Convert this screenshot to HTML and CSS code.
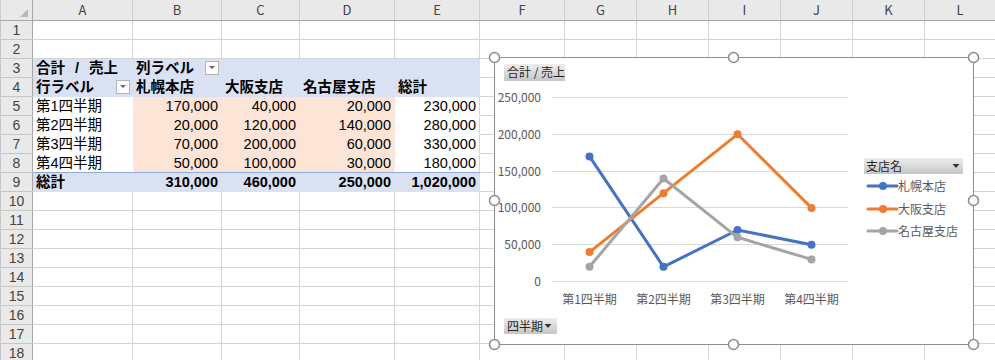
FILE: index.html
```html
<!DOCTYPE html>
<html lang="ja">
<head>
    <meta charset="UTF-8">
    <title>ピボットテーブル - 売上</title>
    <link rel="stylesheet" href="styles.css">
</head>
<body>

<div class="book">
    <table class="sheet">
        <colgroup>
            <col class="col-rh"><col class="col-a"><col class="col-b"><col class="col-c"><col class="col-d"><col class="col-e">
            <col class="col-f"><col class="col-g"><col class="col-h"><col class="col-i"><col class="col-j"><col class="col-k"><col class="col-l">
        </colgroup>
        <tr class="colhdr">
            <th class="corner"></th><th>A</th><th>B</th><th>C</th><th>D</th><th>E</th><th>F</th><th>G</th><th>H</th><th>I</th><th>J</th><th>K</th><th>L</th>
        </tr>
        <tr><th>1</th><td></td><td></td><td></td><td></td><td></td><td></td><td></td><td></td><td></td><td></td><td></td><td></td></tr>
        <tr><th>2</th><td></td><td></td><td></td><td></td><td></td><td></td><td></td><td></td><td></td><td></td><td></td><td></td></tr>
        <tr>
            <th>3</th>
            <td class="pv-h wide">合計 / 売上</td>
            <td class="pv-h"><div class="fld"><span>列ラベル</span><span class="dd"></span></div></td>
            <td class="pv-h"></td><td class="pv-h"></td><td class="pv-h"></td>
            <td></td><td></td><td></td><td></td><td></td><td></td><td></td>
        </tr>
        <tr>
            <th>4</th>
            <td class="pv-h"><div class="fld"><span>行ラベル</span><span class="dd"></span></div></td>
            <td class="pv-h">札幌本店</td><td class="pv-h">大阪支店</td><td class="pv-h">名古屋支店</td><td class="pv-h">総計</td>
            <td></td><td></td><td></td><td></td><td></td><td></td><td></td>
        </tr>
        <tr>
            <th>5</th>
            <td class="pv-r">第1四半期</td><td class="pv-v">170,000</td><td class="pv-v">40,000</td><td class="pv-v">20,000</td><td class="pv-t">230,000</td>
            <td></td><td></td><td></td><td></td><td></td><td></td><td></td>
        </tr>
        <tr>
            <th>6</th>
            <td class="pv-r">第2四半期</td><td class="pv-v">20,000</td><td class="pv-v">120,000</td><td class="pv-v">140,000</td><td class="pv-t">280,000</td>
            <td></td><td></td><td></td><td></td><td></td><td></td><td></td>
        </tr>
        <tr>
            <th>7</th>
            <td class="pv-r">第3四半期</td><td class="pv-v">70,000</td><td class="pv-v">200,000</td><td class="pv-v">60,000</td><td class="pv-t">330,000</td>
            <td></td><td></td><td></td><td></td><td></td><td></td><td></td>
        </tr>
        <tr>
            <th>8</th>
            <td class="pv-r last">第4四半期</td><td class="pv-v last">50,000</td><td class="pv-v last">100,000</td><td class="pv-v last">30,000</td><td class="pv-t last">180,000</td>
            <td></td><td></td><td></td><td></td><td></td><td></td><td></td>
        </tr>
        <tr>
            <th>9</th>
            <td class="pv-g label">総計</td><td class="pv-g">310,000</td><td class="pv-g">460,000</td><td class="pv-g">250,000</td><td class="pv-g">1,020,000</td>
            <td></td><td></td><td></td><td></td><td></td><td></td><td></td>
        </tr>
        <tr><th>10</th><td></td><td></td><td></td><td></td><td></td><td></td><td></td><td></td><td></td><td></td><td></td><td></td></tr>
        <tr><th>11</th><td></td><td></td><td></td><td></td><td></td><td></td><td></td><td></td><td></td><td></td><td></td><td></td></tr>
        <tr><th>12</th><td></td><td></td><td></td><td></td><td></td><td></td><td></td><td></td><td></td><td></td><td></td><td></td></tr>
        <tr><th>13</th><td></td><td></td><td></td><td></td><td></td><td></td><td></td><td></td><td></td><td></td><td></td><td></td></tr>
        <tr><th>14</th><td></td><td></td><td></td><td></td><td></td><td></td><td></td><td></td><td></td><td></td><td></td><td></td></tr>
        <tr><th>15</th><td></td><td></td><td></td><td></td><td></td><td></td><td></td><td></td><td></td><td></td><td></td><td></td></tr>
        <tr><th>16</th><td></td><td></td><td></td><td></td><td></td><td></td><td></td><td></td><td></td><td></td><td></td><td></td></tr>
        <tr><th>17</th><td></td><td></td><td></td><td></td><td></td><td></td><td></td><td></td><td></td><td></td><td></td><td></td></tr>
        <tr><th>18</th><td></td><td></td><td></td><td></td><td></td><td></td><td></td><td></td><td></td><td></td><td></td><td></td></tr>
        <tr><th>19</th><td></td><td></td><td></td><td></td><td></td><td></td><td></td><td></td><td></td><td></td><td></td><td></td></tr>
    </table>

    <!-- ピボットグラフ (シートの上に浮いている) -->
    <svg class="chart" viewBox="480 40 515 320" width="515" height="320">
        <defs>
            <linearGradient id="btn" x1="0" y1="0" x2="0" y2="1">
                <stop offset="0" stop-color="#eeeeee"/>
                <stop offset="1" stop-color="#c6c6c6"/>
            </linearGradient>
        </defs>
        <rect x="494.5" y="57.5" width="479" height="287" fill="#fff" stroke="#8c8c8c"/>

        <g class="grid">
            <line x1="552" y1="97.5" x2="848" y2="97.5"/>
            <line x1="552" y1="134.5" x2="848" y2="134.5"/>
            <line x1="552" y1="171.5" x2="848" y2="171.5"/>
            <line x1="552" y1="207.5" x2="848" y2="207.5"/>
            <line x1="552" y1="244.5" x2="848" y2="244.5"/>
            <line x1="552" y1="281.5" x2="848" y2="281.5"/>
        </g>
        <g class="axis-y">
            <text x="541" y="101.5">250,000</text>
            <text x="541" y="138.5">200,000</text>
            <text x="541" y="175.5">150,000</text>
            <text x="541" y="211.5">100,000</text>
            <text x="541" y="248.5">50,000</text>
            <text x="541" y="285.5">0</text>
        </g>
        <g class="axis-x">
            <text x="589.5" y="304">第1四半期</text>
            <text x="663.5" y="304">第2四半期</text>
            <text x="737.5" y="304">第3四半期</text>
            <text x="811.5" y="304">第4四半期</text>
        </g>

        <g class="series blue">
            <polyline points="589.5,156.4 663.5,266.8 737.5,230 811.5,244.7"/>
            <circle cx="589.5" cy="156.4" r="4"/><circle cx="663.5" cy="266.8" r="4"/>
            <circle cx="737.5" cy="230" r="4"/><circle cx="811.5" cy="244.7" r="4"/>
        </g>
        <g class="series orange">
            <polyline points="589.5,252.1 663.5,193.2 737.5,134.3 811.5,207.9"/>
            <circle cx="589.5" cy="252.1" r="4"/><circle cx="663.5" cy="193.2" r="4"/>
            <circle cx="737.5" cy="134.3" r="4"/><circle cx="811.5" cy="207.9" r="4"/>
        </g>
        <g class="series gray">
            <polyline points="589.5,266.8 663.5,178.5 737.5,237.3 811.5,259.4"/>
            <circle cx="589.5" cy="266.8" r="4"/><circle cx="663.5" cy="178.5" r="4"/>
            <circle cx="737.5" cy="237.3" r="4"/><circle cx="811.5" cy="259.4" r="4"/>
        </g>

        <!-- フィールドボタン -->
        <rect class="fbtn" x="504" y="64" width="61" height="17"/>
        <text class="fbtn-text" x="507" y="77">合計 / 売上</text>

        <rect class="fbtn" x="864" y="158" width="99" height="16"/>
        <text class="fbtn-text" x="866" y="171">支店名</text>
        <polygon class="tri" points="952.5,164 959.5,164 956,168"/>

        <rect class="fbtn" x="504" y="318" width="53" height="16"/>
        <text class="fbtn-text" x="507" y="331">四半期</text>
        <polygon class="tri" points="544.5,324 551.5,324 548,328"/>

        <!-- 凡例 -->
        <g class="series blue">
            <line x1="868" y1="186" x2="897" y2="186"/><circle cx="883" cy="186" r="4"/>
        </g>
        <g class="series orange">
            <line x1="868" y1="209" x2="897" y2="209"/><circle cx="883" cy="209" r="4"/>
        </g>
        <g class="series gray">
            <line x1="868" y1="231" x2="897" y2="231"/><circle cx="883" cy="231" r="4"/>
        </g>
        <g class="legend">
            <text x="898" y="190.5">札幌本店</text>
            <text x="898" y="213.5">大阪支店</text>
            <text x="898" y="235.5">名古屋支店</text>
        </g>

        <!-- 選択ハンドル -->
        <g class="handle">
            <circle cx="494.5" cy="57.5" r="5"/><circle cx="733.5" cy="57.5" r="5"/><circle cx="973.5" cy="57.5" r="5"/>
            <circle cx="494.5" cy="200.5" r="5"/><circle cx="973.5" cy="200.5" r="5"/>
            <circle cx="494.5" cy="344.5" r="5"/><circle cx="733.5" cy="344.5" r="5"/><circle cx="973.5" cy="344.5" r="5"/>
        </g>
    </svg>
</div>

</body>
</html>
```

FILE: styles.css
```css
body {
    margin: 0;
    padding: 0;
    background-color: #fff;
    font-family: "Liberation Sans", "Noto Sans CJK JP", sans-serif;
    color: #000;
    overflow: hidden;
}
.book {
    position: relative;
    width: 995px;
    height: 360px;
    overflow: hidden;
}

/* シート */
.sheet {
    border-collapse: collapse;
    table-layout: fixed;
    width: 995px;
    font-size: 14.5px;
}
.col-rh { width: 32px; }
.col-a { width: 100px; }
.col-b { width: 89px; }
.col-c { width: 78px; }
.col-d { width: 95px; }
.col-e { width: 85px; }
.col-f { width: 85px; }
.col-g, .col-h, .col-i, .col-j, .col-k { width: 72px; }
.col-l { width: 71px; }

.sheet td {
    height: 18px;
    padding: 0 3px;
    border: 1px solid #d4d4d4;
    white-space: nowrap;
    overflow: hidden;
    line-height: 16px;
}
.sheet th {
    height: 18px;
    padding: 0;
    font-weight: normal;
    font-size: 14px;
    line-height: 16px;
    color: #444;
    background-color: #e9e9e9;
    border: 1px solid #c6c6c6;
    border-right-color: #a6a6a6;
}
.colhdr th {
    height: 20px;
    font-family: "Noto Sans CJK JP", sans-serif;
    font-size: 13px;
    border-color: #d0d0d0;
    border-bottom-color: #a6a6a6;
    border-top: none;
}
.colhdr th.corner {
    position: relative;
    border-right-color: #a6a6a6;
}
.corner::after {
    content: "";
    position: absolute;
    right: 4px;
    bottom: 3px;
    border-left: 8px solid transparent;
    border-bottom: 8px solid #b8b8b8;
}

/* ピボットテーブル */
.pv-h {
    background-color: #d9e1f2;
    border-color: #d9e1f2 !important;
    font-weight: bold;
}
.pv-h.wide {
    word-spacing: 6px;
}
.pv-r {
    border-color: #fff !important;
}
.pv-v {
    background-color: #fce4d6;
    border-color: #fce4d6 !important;
    text-align: right;
}
.pv-t {
    text-align: right;
    border-color: #fff !important;
    border-right-color: #d4d4d4 !important;
}
.sheet td.last {
    border-bottom-color: #8ea9db !important;
}
.pv-g {
    background-color: #d9e1f2;
    border-color: #d9e1f2 !important;
    border-top-color: #8ea9db !important;
    font-weight: bold;
    text-align: right;
}
.pv-g.label {
    text-align: left;
}
.fld {
    display: flex;
    justify-content: space-between;
    align-items: center;
    margin-right: -1px;
}
.dd {
    position: relative;
    width: 12px;
    height: 12px;
    border: 1px solid #b4b4b4;
    background-color: #fdfdfd;
}
.dd::after {
    content: "";
    position: absolute;
    left: 3px;
    top: 4px;
    border-left: 3px solid transparent;
    border-right: 3px solid transparent;
    border-top: 3px solid #666;
}

/* グラフ */
.chart {
    position: absolute;
    left: 480px;
    top: 40px;
    font-family: "Noto Sans CJK JP", sans-serif;
    font-size: 12px;
}
.grid line {
    stroke: #d9d9d9;
    stroke-width: 1;
}
.axis-y text {
    fill: #595959;
    text-anchor: end;
}
.axis-x text {
    fill: #595959;
    text-anchor: middle;
}
.legend text {
    fill: #595959;
}
.series polyline,
.series line {
    fill: none;
    stroke-width: 3;
    stroke-linejoin: round;
    stroke-linecap: round;
}
.blue polyline, .blue line { stroke: #4472c4; }
.blue circle { fill: #4472c4; }
.orange polyline, .orange line { stroke: #ed7d31; }
.orange circle { fill: #ed7d31; }
.gray polyline, .gray line { stroke: #a5a5a5; }
.gray circle { fill: #a5a5a5; }

.fbtn {
    fill: url(#btn);
}
.fbtn-text {
    fill: #262626;
}
.tri {
    fill: #333;
}
.handle circle {
    fill: #fff;
    stroke: #8c8c8c;
    stroke-width: 1.5;
}
```
